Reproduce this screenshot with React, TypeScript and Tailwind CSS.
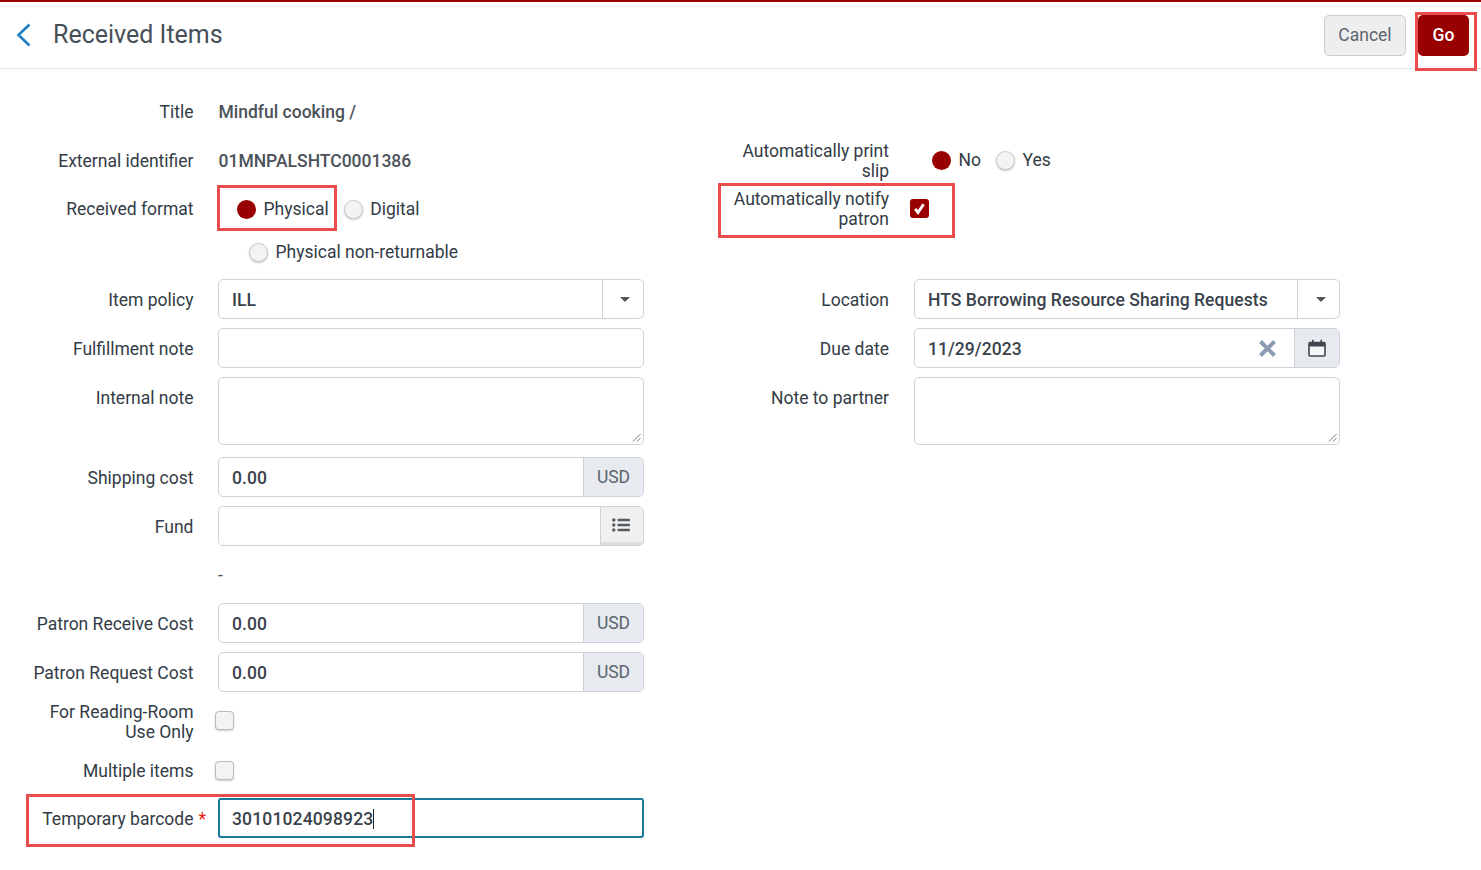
import React from "react";

const inputBox = "border border-[#ced2da] rounded-[5px] bg-white";
const valueText = "flex-1 pl-[13px] pt-[2px] flex items-center font-medium tracking-[0.05px] text-[#3a424c]";

function Redbox({ className }: { className: string }) {
  return <div className={`absolute border-[3px] border-[#e84c4c] pointer-events-none ${className}`} />;
}

type RowProps = {
  label?: React.ReactNode;
  h?: string;
  mb?: string;
  children?: React.ReactNode;
  top?: boolean;
  plain?: boolean;
};

function Row({ label, h = "h-[40px]", mb = "mb-[9px]", children, top = false, plain = false, w = "w-[193.5px]", gap = "ml-[24.5px]" }: RowProps & { w?: string; gap?: string }) {
  return (
    <div className={`flex ${top ? "items-start" : "items-center"} ${h} ${mb}`}>
      <div className={`${w} shrink-0 text-right text-[#333c46] leading-[20px] ${top ? "pt-[11px]" : plain ? "" : "pt-[2px]"}`}>{label}</div>
      <div className={`${gap} w-[426px] flex items-center`}>{children}</div>
    </div>
  );
}

function RightRow(props: RowProps) {
  return <Row {...props} w="w-[245px]" gap="ml-[25px]" />;
}

function Radio({ on, label, className = "" }: { on?: boolean; label: string; className?: string }) {
  return (
    <div className={`flex items-center text-[#333c46] ${className}`}>
      {on ? (
        <span className="w-[19px] h-[19px] rounded-full bg-[#990000]" />
      ) : (
        <span className="w-[19px] h-[19px] rounded-full bg-[#f3f3f3] border border-[#cccccc] shadow-[0_1px_2px_rgba(0,0,0,0.25)]" />
      )}
      <span className="ml-[7.5px]">{label}</span>
    </div>
  );
}

function Check({ on, className = "" }: { on?: boolean; className?: string }) {
  if (on) {
    return (
      <span className={`w-[19px] h-[19px] rounded-[3px] bg-[#990000] flex items-center justify-center ${className}`}>
        <svg width="13" height="13" viewBox="0 0 13 13" fill="none">
          <path d="M2.2 6.8 L5 10.6 L10.6 2.2" stroke="white" strokeWidth="2.8" />
        </svg>
      </span>
    );
  }
  return <span className={`w-[19px] h-[19px] rounded-[4px] bg-[#f3f3f3] border border-[#bbbbbb] shadow-[0_1px_2px_rgba(0,0,0,0.2)] ${className}`} />;
}

function Caret({ className = "" }: { className?: string }) {
  return <span className={`w-0 h-0 border-l-[5px] border-r-[5px] border-t-[5px] border-l-transparent border-r-transparent border-t-[#555555] ${className}`} />;
}

function MoneyInput() {
  return (
    <div className={`${inputBox} w-full h-[40px] flex overflow-hidden`}>
      <div className={valueText}>0.00</div>
      <div className="w-[60px] bg-[#e7eaee] border-l border-[#ced2da] flex items-center justify-center text-[#5c6670]">USD</div>
    </div>
  );
}

function Resizer() {
  return (
    <svg className="absolute right-[2px] bottom-[2px]" width="9" height="9" viewBox="0 0 9 9">
      <path d="M8.5 1 L1 8.5 M8.5 5 L5 8.5" stroke="#777777" strokeWidth="1" />
    </svg>
  );
}

export default function App() {
  return (
    <div className="relative w-[1481px] h-[870px] bg-white text-[17.5px] overflow-hidden" style={{ fontFamily: "Roboto, sans-serif" }}>
      <div className="h-[2px] bg-[#990000]" />
      <header className="h-[67px] border-b border-[#e3e3e3] flex items-center pl-[16px] pr-[12px]">
        <svg width="16" height="24" viewBox="0 0 16 24" fill="none">
          <path d="M13.5 1.5 L2.5 12 L13.5 22.5" stroke="#1f7fbf" strokeWidth="2.6" />
        </svg>
        <h1 className="ml-[21px] text-[25px] text-[#46505a]">Received Items</h1>
        <div className="ml-auto flex items-center gap-[12px] mt-[1px]">
          <button className="w-[82px] h-[41px] rounded-[5px] bg-[#eeeeee] border border-[#cccccc] text-[#5c6670]">Cancel</button>
          <button className="w-[51px] h-[41px] rounded-[5px] bg-[#990000] text-white font-medium">Go</button>
        </div>
      </header>

      <main className="flex pt-[23px]">
        <div className="w-[644px] shrink-0">
          <Row label="Title" mb="mb-[9px]" plain>
            <span className="font-medium text-[#4b5259] ml-[0.5px]">Mindful cooking /</span>
          </Row>
          <Row label="External identifier" mb="mb-[8px]" plain>
            <span className="font-medium text-[#4b5259] ml-[0.5px]">01MNPALSHTC0001386</span>
          </Row>
          <Row label="Received format" mb="mb-[3px]" plain>
            <Radio on label="Physical" className="ml-[19px]" />
            <Radio label="Digital" className="ml-[15px]" />
          </Row>
          <Row h="h-[40px]" mb="mb-[7px]">
            <Radio label="Physical non-returnable" className="ml-[31px]" />
          </Row>
          <Row label="Item policy">
            <div className={`${inputBox} w-full h-[40px] flex`}>
              <div className={valueText}>ILL</div>
              <div className="w-[41px] border-l border-[#ced2da] flex items-center justify-center"><Caret className="ml-[4px]" /></div>
            </div>
          </Row>
          <Row label="Fulfillment note">
            <div className={`${inputBox} w-full h-[40px]`} />
          </Row>
          <Row label="Internal note" h="h-[68px]" mb="mb-[12px]" top>
            <div className={`${inputBox} relative w-full h-[68px]`}><Resizer /></div>
          </Row>
          <Row label="Shipping cost"><MoneyInput /></Row>
          <Row label="Fund" mb="mb-[9px]">
            <div className={`${inputBox} w-full h-[40px] flex overflow-hidden`}>
              <div className="flex-1" />
              <div className="w-[43px] bg-[#f0f0f0] border-l border-[#ced2da] border-b-[3px] border-b-[#dddddd] flex items-center justify-center">
                <svg className="mr-[2px]" width="18" height="14" viewBox="0 0 18 14" fill="#555b63">
                  <circle cx="1.8" cy="2" r="1.7" />
                  <circle cx="1.8" cy="7" r="1.7" />
                  <circle cx="1.8" cy="12" r="1.7" />
                  <rect x="5.5" y="0.7" width="12.5" height="2.6" rx="0.8" />
                  <rect x="5.5" y="5.7" width="12.5" height="2.6" rx="0.8" />
                  <rect x="5.5" y="10.7" width="12.5" height="2.6" rx="0.8" />
                </svg>
              </div>
            </div>
          </Row>
          <Row h="h-[40px]" mb="mb-[8px]">
            <span className="text-[#4b5259]">-</span>
          </Row>
          <Row label="Patron Receive Cost"><MoneyInput /></Row>
          <Row label="Patron Request Cost" mb="mb-[10px]"><MoneyInput /></Row>
          <Row label={<>For Reading-Room<br />Use Only</>} mb="mb-[8px]" plain>
            <Check className="-ml-[3px] mt-[-3px]" />
          </Row>
          <Row label="Multiple items" mb="mb-[8px]">
            <Check className="-ml-[3px]" />
          </Row>
          <Row label={<>Temporary barcode<span className="inline-block w-0 ml-[5px] -mr-[5px] text-[#e82020]">*</span></>}>
            <div className="w-full h-[40px] border-2 border-[#15799c] rounded-[3px] pl-[12px] pt-[2px] flex items-center font-medium tracking-[0.15px] text-[#3a424c]">
              30101024098923<span className="w-px h-[20px] bg-[#222222]" />
            </div>
          </Row>
        </div>

        <div className="flex-1">
          <RightRow h="h-[40px]" mb="mb-[9px]" />
          <RightRow label={<>Automatically print<br />slip</>} mb="mb-[8px]" plain>
            <Radio on label="No" className="ml-[18px] -mt-[2px]" />
            <Radio label="Yes" className="ml-[15px] -mt-[2px]" />
          </RightRow>
          <RightRow label={<>Automatically notify<br />patron</>} mb="mb-[3px]" plain>
            <Check on className="ml-[-4px] mt-[-2px]" />
          </RightRow>
          <RightRow mb="mb-[7px]" />
          <RightRow label="Location">
            <div className={`${inputBox} w-full h-[40px] flex`}>
              <div className={valueText}>HTS Borrowing Resource Sharing Requests</div>
              <div className="w-[42px] border-l border-[#ced2da] flex items-center justify-center"><Caret className="ml-[5px]" /></div>
            </div>
          </RightRow>
          <RightRow label="Due date">
            <div className={`${inputBox} w-full h-[40px] flex overflow-hidden`}>
              <div className={valueText}>11/29/2023</div>
              <div className="w-[54px] flex items-center justify-center">
                <svg width="17" height="17" viewBox="0 0 17 17" fill="none">
                  <path d="M1.5 1.5 L15.5 15.5 M15.5 1.5 L1.5 15.5" stroke="#8c9ab4" strokeWidth="4" />
                </svg>
              </div>
              <div className="w-[45px] bg-[#e7eaee] border-l border-[#ced2da] flex items-center justify-center">
                <svg width="18" height="18" viewBox="0 0 18 18" fill="none">
                  <rect x="1" y="3.5" width="16" height="13.5" rx="1" fill="#f4f6f8" stroke="#3f4650" strokeWidth="1.6" />
                  <rect x="1" y="3" width="16" height="4.5" fill="#3f4650" />
                  <rect x="4" y="0.8" width="1.6" height="3.5" fill="#3f4650" />
                  <rect x="12.4" y="0.8" width="1.6" height="3.5" fill="#3f4650" />
                </svg>
              </div>
            </div>
          </RightRow>
          <RightRow label="Note to partner" h="h-[68px]" top>
            <div className={`${inputBox} relative w-full h-[68px]`}><Resizer /></div>
          </RightRow>
        </div>
      </main>

      <Redbox className="left-[1415px] top-[12px] w-[62px] h-[59px]" />
      <Redbox className="left-[217px] top-[185px] w-[120px] h-[46px]" />
      <Redbox className="left-[718px] top-[183px] w-[237px] h-[55px]" />
      <Redbox className="left-[26px] top-[794px] w-[389px] h-[53px]" />
    </div>
  );
}
